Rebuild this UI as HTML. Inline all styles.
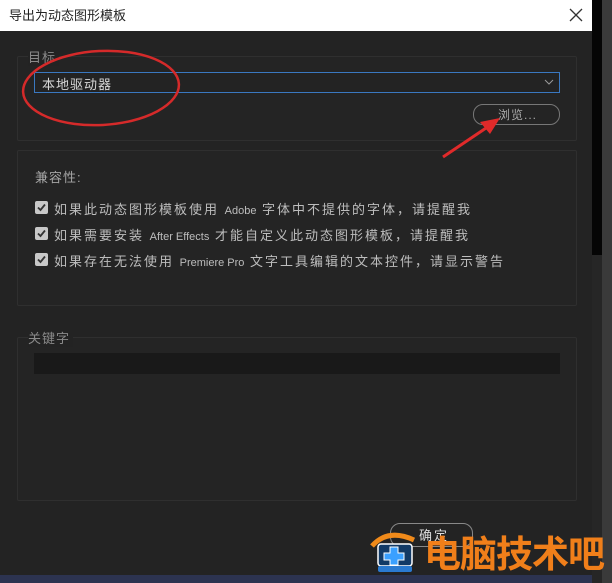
<!DOCTYPE html>
<html><head><meta charset="utf-8">
<style>
*{margin:0;padding:0;box-sizing:border-box}
body{width:612px;height:583px;overflow:hidden;background:#2e2e2e;font-family:"Liberation Sans","Noto Sans CJK SC",sans-serif;position:relative}
.abs{position:absolute}
.dlg{left:0;top:0;width:592px;height:583px;background:#232323}
.title{left:0;top:0;width:592px;height:31px;background:#fff;color:#222;font-size:13px;line-height:31px;padding-left:9px}
.panel{border:1px solid #2f2f2f;background:#242424;border-radius:2px}
.lbl{color:#8a8a8a;font-size:13px;letter-spacing:1px}
.txt{color:#bdbdbd;font-size:13px;white-space:nowrap;letter-spacing:2px}
.cb{width:13px;height:13px;background:#c8c8c8;border-radius:2px}
.sm{font-size:11px;letter-spacing:0}
</style></head><body>
<div class="abs" style="left:592px;top:0;width:10px;height:255px;background:#050505"></div>
<div class="abs" style="left:592px;top:255px;width:10px;height:328px;background:#262626"></div>
<div class="abs" style="left:602px;top:0;width:10px;height:583px;background:#3a3a3a"></div>
<div class="abs dlg"></div>
<div class="abs title">导出为动态图形模板</div>
<svg class="abs" style="left:568px;top:7px" width="16" height="16"><path d="M2 2L14 14M14 2L2 14" stroke="#333" stroke-width="1.3"/></svg>

<div class="abs panel" style="left:17px;top:56px;width:560px;height:85px"></div>
<div class="abs lbl" style="left:28px;top:47px;background:#232323;padding-right:3px">目标</div>
<div class="abs" style="left:34px;top:72px;width:526px;height:21px;border:1px solid #3a78c0;background:#232323"></div>
<div class="abs txt" style="left:42px;top:74px;color:#d8d8d8;letter-spacing:1px">本地驱动器</div>
<svg class="abs" style="left:544px;top:78px" width="10" height="8"><path d="M1 2L5 6L9 2" stroke="#999" fill="none"/></svg>
<div class="abs" style="left:473px;top:104px;width:87px;height:21px;border:1px solid #777;border-radius:10px"></div>
<div class="abs txt" style="left:498px;top:106px;color:#aaa;font-size:12px;letter-spacing:1px">浏览...</div>

<div class="abs panel" style="left:17px;top:150px;width:560px;height:156px"></div>
<div class="abs lbl" style="left:35px;top:167px;color:#a5a5a5">兼容性:</div>
<div class="abs cb" style="left:35px;top:201px"></div>
<div class="abs cb" style="left:35px;top:227px"></div>
<div class="abs cb" style="left:35px;top:253px"></div>
<svg class="abs" style="left:35px;top:201px" width="13" height="70"><g stroke="#333" stroke-width="1.8" fill="none"><path d="M3 6.5L5.5 9L10 3.5"/><path d="M3 32.5L5.5 35L10 29.5"/><path d="M3 58.5L5.5 61L10 55.5"/></g></svg>
<div class="abs txt" style="left:54px;top:199px">如果此动态图形模板使用 <span class="sm">Adobe</span> 字体中不提供的字体，请提醒我</div>
<div class="abs txt" style="left:54px;top:225px">如果需要安装 <span class="sm">After Effects</span> 才能自定义此动态图形模板，请提醒我</div>
<div class="abs txt" style="left:54px;top:251px">如果存在无法使用 <span class="sm">Premiere Pro</span> 文字工具编辑的文本控件，请显示警告</div>

<div class="abs panel" style="left:17px;top:337px;width:560px;height:164px"></div>
<div class="abs lbl" style="left:28px;top:328px;background:#232323;padding-right:3px">关键字</div>
<div class="abs" style="left:34px;top:353px;width:526px;height:21px;background:#191919"></div>

<div class="abs" style="left:390px;top:523px;width:83px;height:24px;border:1px solid #888;border-radius:10px"></div>
<div class="abs txt" style="left:419px;top:525px;color:#ddd">确定</div>
<div class="abs" style="left:0;top:575px;width:592px;height:8px;background:#2c3350"></div>

<svg class="abs" style="left:368px;top:524px" width="54" height="50">
<path d="M4 22 Q20 4 46 16" stroke="#f08a1a" stroke-width="5" fill="none"/>
<rect x="10" y="20" width="34" height="22" rx="3" fill="#123a66" stroke="#fff" stroke-width="1.5"/>
<path d="M22 23h8v6h6v7h-6v5h-8v-5h-6v-7h6z" fill="#3aa0ff" stroke="#fff"/>
<rect x="10" y="42" width="34" height="6" rx="2" fill="#2a7ad0"/>
</svg>
<div class="abs" style="left:424px;top:533px;color:#f07f1a;font-size:37px;font-weight:bold;line-height:44px;letter-spacing:-1px;white-space:nowrap">电脑技术吧</div>

<svg class="abs" style="left:0;top:0" width="612" height="583">
<ellipse cx="101" cy="88" rx="78" ry="37" transform="rotate(-3 101 88)" stroke="#d52a2a" stroke-width="2.5" fill="none"/>
<path d="M443 157L492 124" stroke="#e02a2a" stroke-width="3"/>
<path d="M500 118L480 122L490 134Z" fill="#e02a2a"/>
</svg>
</body></html>
